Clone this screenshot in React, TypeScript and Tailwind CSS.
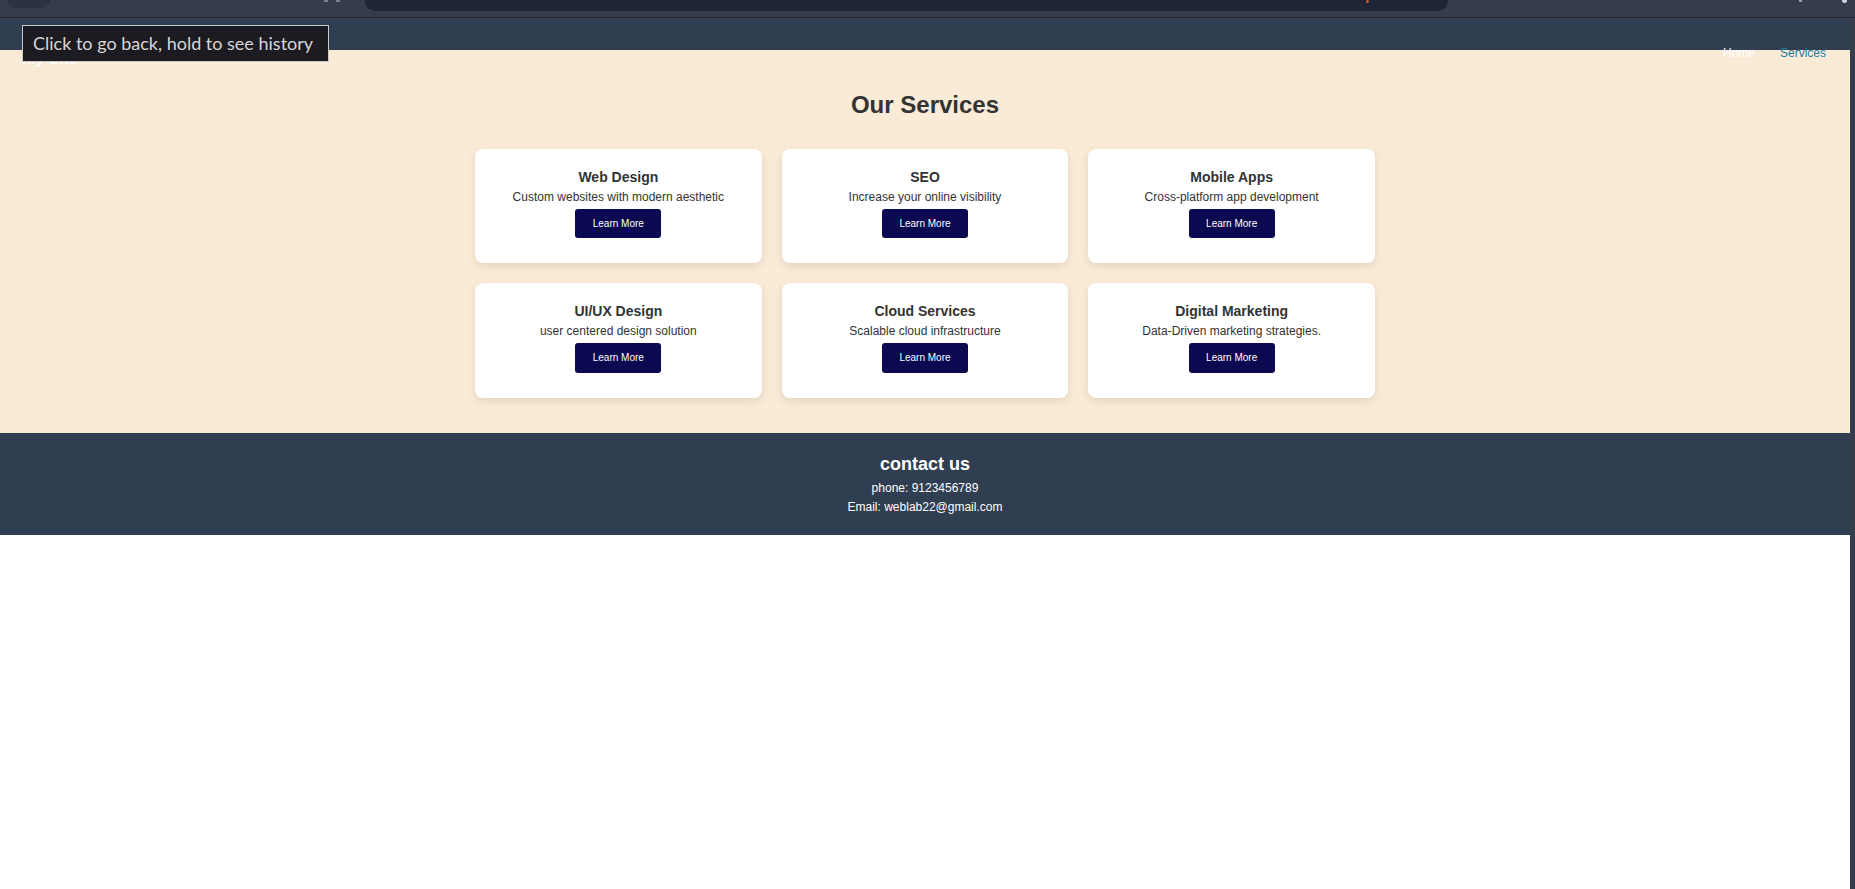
import React from 'react';

const services = [
  { title: 'Web Design', text: 'Custom websites with modern aesthetic' },
  { title: 'SEO', text: 'Increase your online visibility' },
  { title: 'Mobile Apps', text: 'Cross-platform app development' },
  { title: 'UI/UX Design', text: 'user centered design solution' },
  { title: 'Cloud Services', text: 'Scalable cloud infrastructure' },
  { title: 'Digital Marketing', text: 'Data-Driven marketing strategies.' },
];

const ServiceCard: React.FC<{ title: string; text: string }> = ({ title, text }) => (
  <div className="bg-white rounded-[8px] shadow-[0_3px_8px_rgba(0,0,0,0.1)] p-5 flex flex-col items-center text-center">
    <h3 className="text-[14px] leading-[16px] font-bold text-[#333] mb-[5px]">{title}</h3>
    <p className="text-[12px] leading-[14px] text-[#333] mb-[5px]">{text}</p>
    <button className="bg-[#0b0950] text-white text-[10px] leading-[11.5px] py-[9px] px-[17.5px] rounded-[3px] mb-[5px]">
      Learn More
    </button>
  </div>
);

export default function App() {
  return (
    <div className="relative min-h-[889px] bg-white font-['Liberation_Sans',Arial,sans-serif]">
      {/* browser chrome */}
      <div className="h-[17px] bg-[#353c4b] flex items-start">
        <div className="ml-[7px] w-[43px] h-[8px] rounded-b-[8px] bg-[#2c3240]"></div>
        <div className="ml-[274px] flex gap-[8px]">
          <div className="w-[4px] h-[2px] bg-[#7d8290]"></div>
          <div className="w-[4px] h-[2px] bg-[#7d8290]"></div>
        </div>
        <div className="ml-[25px] w-[1083px] h-[11px] rounded-b-[10px] bg-[#1e2536] flex items-start">
          <div className="ml-[1001px] w-[3px] h-[3px] rounded-full bg-[#e8541c]"></div>
        </div>
        <div className="ml-auto mr-[8px] flex gap-[40px]">
          <div className="w-[3px] h-[2px] bg-[#9aa0ac]"></div>
          <div className="w-[5px] h-[3px] rounded-b-full bg-[#d0d3da]"></div>
        </div>
      </div>
      <div className="h-px bg-[#25282f]"></div>

      <div className="flex min-h-[871px]">
        <div className="flex-1">
          {/* header - its text spills below the bar */}
          <header className="relative z-10 h-[32px] bg-[#2f3e50] flex justify-between items-start pl-[22px] pr-[24px]">
            <div className="mt-[32px] text-[16px] leading-[18px] font-bold text-white">My Site</div>
            <nav className="mt-[28px] flex gap-[25px] text-[12px] leading-[14px]">
              <a className="text-white">Home</a>
              <a className="text-[#1a7da6]">Services</a>
            </nav>
          </header>

          {/* services */}
          <section className="bg-[#faebd7] pt-[41px] pb-[35px]">
            <h2 className="text-center text-[24px] leading-[27.5px] font-bold text-[#333] mb-[30px]">Our Services</h2>
            <div className="mx-auto max-w-[900px] grid grid-cols-3 gap-5">
              {services.map(s => (
                <ServiceCard key={s.title} title={s.title} text={s.text} />
              ))}
            </div>
          </section>

          {/* footer */}
          <footer className="bg-[#2f3e50] text-white text-center pt-[21px] pb-[21px]">
            <h3 className="text-[18px] leading-[21px] font-bold mb-[6px]">contact us</h3>
            <p className="text-[12px] leading-[14px]">phone: 9123456789</p>
            <p className="text-[12px] leading-[14px] mt-[5px]">Email: weblab22@gmail.com</p>
          </footer>
        </div>
        <div className="w-[5px] bg-[#353c4b]"></div>
      </div>

      {/* back button tooltip */}
      <div className="absolute z-20 left-[22px] top-[25px] w-[307px] h-[37px] bg-[#1c1b21] border border-[#c9c9c9] flex items-center pl-[10px] font-['Lato',sans-serif] text-[18px] text-[#d6d6d6]">
        Click to go back, hold to see history
      </div>
    </div>
  );
}
